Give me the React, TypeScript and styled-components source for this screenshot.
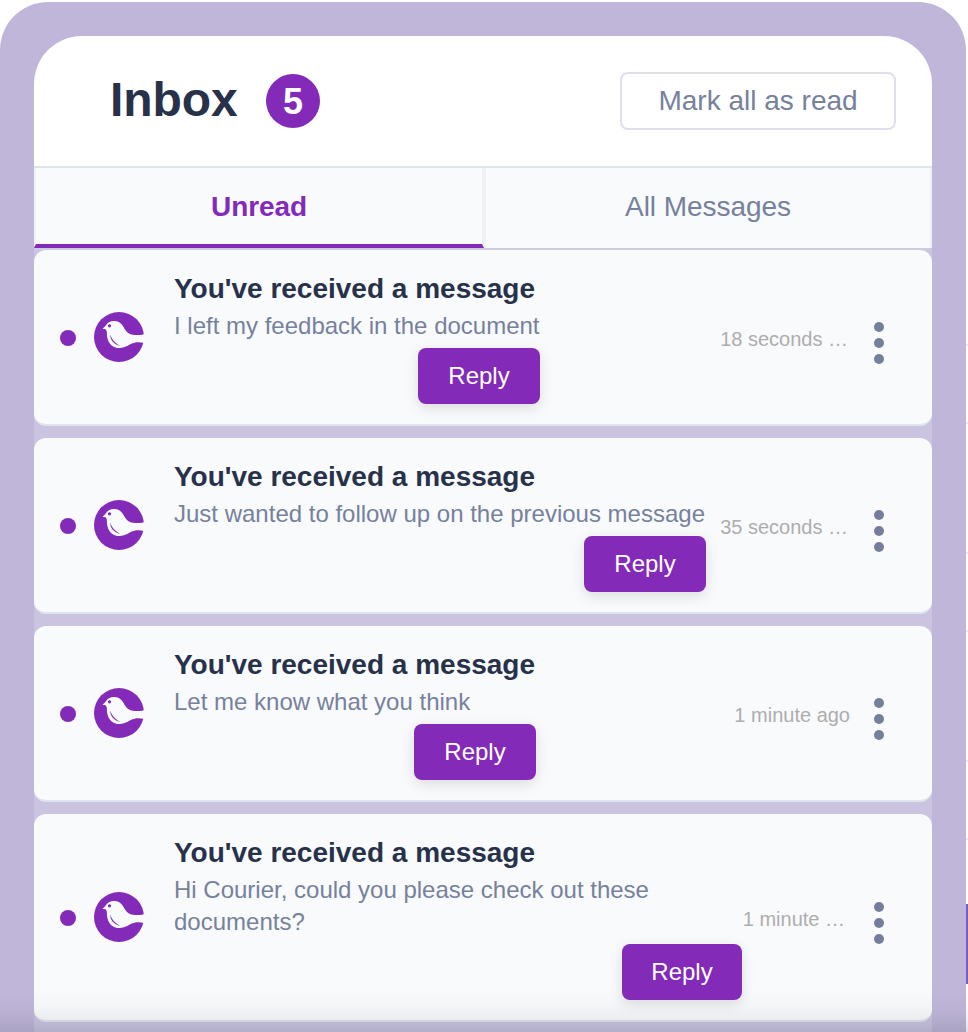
import React from 'react';
import styled, { createGlobalStyle } from 'styled-components';

const GlobalStyle = createGlobalStyle`
  * { box-sizing: border-box; }
  body {
    margin: 0;
    background: #fff;
    font-family: "Liberation Sans", Helvetica, Arial, sans-serif;
    overflow: hidden;
  }
  button { font-family: inherit; cursor: pointer; }
`;

const Page = styled.div`
  position: relative;
  display: flex;
  width: 968px;
  height: 1032px;
  padding-top: 2px;
  overflow: hidden;
`;

const Frame = styled.main`
  width: 966px;
  height: 1030px;
  padding: 34px 34px 0;
  background: #c0b6d9;
  border-radius: 48px 48px 0 0;
`;

const Panel = styled.section`
  height: 996px;
  overflow: hidden;
  background: #cbc4e1;
  border-radius: 48px 48px 0 0;
`;

const Header = styled.header`
  display: flex;
  align-items: center;
  height: 130px;
  padding: 0 36px 0 76px;
  background: #fff;
`;

const Heading = styled.h1`
  width: 156px;
  margin: 0 0 2px;
  color: #27324a;
  font-size: 48px;
  line-height: 56px;
  letter-spacing: -0.1px;
`;

const CountBadge = styled.span`
  width: 54px;
  height: 54px;
  color: #fff;
  background: #842ab9;
  border-radius: 50%;
  font-size: 36px;
  font-weight: 700;
  line-height: 56px;
  text-align: center;
`;

const MarkReadButton = styled.button`
  width: 276px;
  height: 58px;
  margin-left: auto;
  padding: 0;
  color: #76819c;
  background: #fff;
  border: 2px solid #e1ddef;
  border-radius: 8px;
  font-size: 28px;
  line-height: 54px;
`;

const Tabs = styled.nav`
  display: flex;
  height: 84px;
  border-top: 2px solid #e0e3eb;
  border-bottom: 2px solid #cdcbe0;
`;

const Tab = styled.button<{ $active?: boolean }>`
  width: ${p => (p.$active ? 450 : 448)}px;
  height: 80px;
  padding: ${p => (p.$active ? '2px 0 0' : '0 0 2px')};
  color: ${p => (p.$active ? '#842ab9' : '#76819c')};
  background: #f9fafc;
  border: 2px solid #eff1f4;
  border-top: 0;
  border-bottom: ${p => (p.$active ? '4px solid #842ab9' : '0')};
  font-size: 28px;
  font-weight: ${p => (p.$active ? 700 : 400)};
  line-height: 32px;
  letter-spacing: ${p => (p.$active ? -0.1 : -0.05)}px;
`;

const MessageList = styled.div`
  display: flex;
  flex-direction: column;
  gap: 12px;
`;

const MessageCard = styled.article<{ $tall?: boolean }>`
  display: flex;
  height: ${p => (p.$tall ? 208 : 176)}px;
  padding-left: 26px;
  background: #f9fafc;
  border-bottom: 2px solid #e0e4ec;
  border-radius: 12px;
`;

const Sender = styled.div`
  display: flex;
  align-items: center;
  gap: 18px;
  width: 114px;
`;

const UnreadDot = styled.span`
  width: 16px;
  height: 16px;
  margin-top: 2px;
  background: #842ab9;
  border-radius: 50%;
`;

const Content = styled.div<{ $width: number }>`
  display: flex;
  flex-direction: column;
  flex: none;
  width: ${p => p.$width}px;
  padding-top: 22px;
`;

const Title = styled.h2`
  margin: 0;
  color: #27324a;
  font-size: 28px;
  line-height: 34px;
  white-space: nowrap;
`;

const Body = styled.p`
  width: max-content;
  margin: 4px 0 0;
  color: #76819c;
  font-size: 24px;
  line-height: 32px;
  white-space: pre-line;
`;

const ReplyButton = styled.button<{ $narrow?: boolean }>`
  align-self: flex-end;
  width: ${p => (p.$narrow ? 120 : 122)}px;
  height: 56px;
  margin-top: 6px;
  padding: 0;
  color: #fff;
  background: #842ab9;
  border: 0;
  border-radius: 8px;
  box-shadow: 0 4px 14px rgba(0, 0, 0, 0.12);
  font-size: 24px;
  line-height: 56px;
`;

const Meta = styled.div<{ $inset: number }>`
  display: flex;
  align-items: center;
  margin-left: auto;
  padding-right: 48px;
  gap: ${p => p.$inset}px;
`;

const Time = styled.time`
  margin-top: 3px;
  color: #adadad;
  font-size: 20px;
  line-height: 24px;
  white-space: nowrap;
`;

const MoreButton = styled.button`
  display: flex;
  flex-direction: column;
  gap: 6px;
  margin-top: 12px;
  padding: 0;
  background: none;
  border: 0;
`;

const MoreDot = styled.span`
  width: 10px;
  height: 10px;
  background: #74809b;
  border-radius: 50%;
`;

const BottomShade = styled.div`
  position: absolute;
  inset: auto 0 0;
  height: 44px;
  background: linear-gradient(
    rgba(40, 50, 60, 0),
    rgba(40, 50, 60, 0.025) 40%,
    rgba(40, 50, 60, 0.065) 70%,
    rgba(40, 50, 60, 0.15)
  );
  pointer-events: none;
`;

const Backdrop = styled.aside`
  display: flex;
  flex-direction: column;
  width: 2px;
  padding-top: 342px;
`;

const Rule = styled.i<{ $gap: number }>`
  flex: none;
  height: 2px;
  margin-bottom: ${p => p.$gap}px;
  background: #e9e9ee;
`;

const BackdropAccent = styled.i`
  flex: none;
  height: 80px;
  background: #7a5bcb;
`;

const CourierLogo = () => (
  <svg width="50" height="50" viewBox="0 0 50 50" aria-label="Courier">
    <circle cx="25" cy="25" r="25" fill="#842ab9" />
    <path
      fill="#f9fafc"
      d="M8.5 16.8C9.6 15.8 10.8 15 11.5 13.8C13 10.7 16.3 9 20 9C24.3 9 27.5 11 29.3 14.5C31.8 19.3 34.3 22.9 41 23.1C44.4 23.2 47.2 22.9 51 22V31.3C45.5 29.7 41 29.9 37.2 31.8C33.5 33.7 30.6 36 25.7 36C18.5 36 14.1 31.5 13.1 24.4C12.8 22.1 13.1 19.1 12.2 17.9C11.4 16.8 9.8 17.5 8.5 16.8Z"
    />
    <circle cx="15.5" cy="13.8" r="1.6" fill="#842ab9" />
    <path fill="#842ab9" d="M16.2 22.6C17.8 27.6 20.8 31.2 26.2 33.9C20.4 32.8 16.2 28.6 16.2 22.6Z" />
  </svg>
);

interface Message {
  body: string;
  time: string;
  width: number;
  timeGap: number;
  tall?: boolean;
}

const messages: Message[] = [
  { body: 'I left my feedback in the document', time: '18 seconds …', width: 366, timeGap: 26 },
  { body: 'Just wanted to follow up on the previous message', time: '35 seconds …', width: 532, timeGap: 26 },
  { body: 'Let me know what you think', time: '1 minute ago', width: 362, timeGap: 24 },
  {
    body: 'Hi Courier, could you please check out these\ndocuments?',
    time: '1 minute …',
    width: 568,
    timeGap: 29,
    tall: true,
  },
];

export default function App() {
  return (
    <>
      <GlobalStyle />
      <Page>
        <Frame>
          <Panel>
            <Header>
              <Heading>Inbox</Heading>
              <CountBadge>5</CountBadge>
              <MarkReadButton>Mark all as read</MarkReadButton>
            </Header>
            <Tabs>
              <Tab $active>Unread</Tab>
              <Tab>All Messages</Tab>
            </Tabs>
            <MessageList>
              {messages.map(m => (
                <MessageCard key={m.body} $tall={m.tall}>
                  <Sender>
                    <UnreadDot />
                    <CourierLogo />
                  </Sender>
                  <Content $width={m.width}>
                    <Title>You've received a message</Title>
                    <Body>{m.body}</Body>
                    <ReplyButton $narrow={m.tall}>Reply</ReplyButton>
                  </Content>
                  <Meta $inset={m.timeGap}>
                    <Time>{m.time}</Time>
                    <MoreButton aria-label="More options">
                      <MoreDot />
                      <MoreDot />
                      <MoreDot />
                    </MoreButton>
                  </Meta>
                </MessageCard>
              ))}
            </MessageList>
          </Panel>
        </Frame>
        <Backdrop>
          <Rule $gap={76} />
          <Rule $gap={128} />
          <Rule $gap={76} />
          <Rule $gap={128} />
          <Rule $gap={76} />
          <Rule $gap={64} />
          <BackdropAccent />
        </Backdrop>
        <BottomShade />
      </Page>
    </>
  );
}
